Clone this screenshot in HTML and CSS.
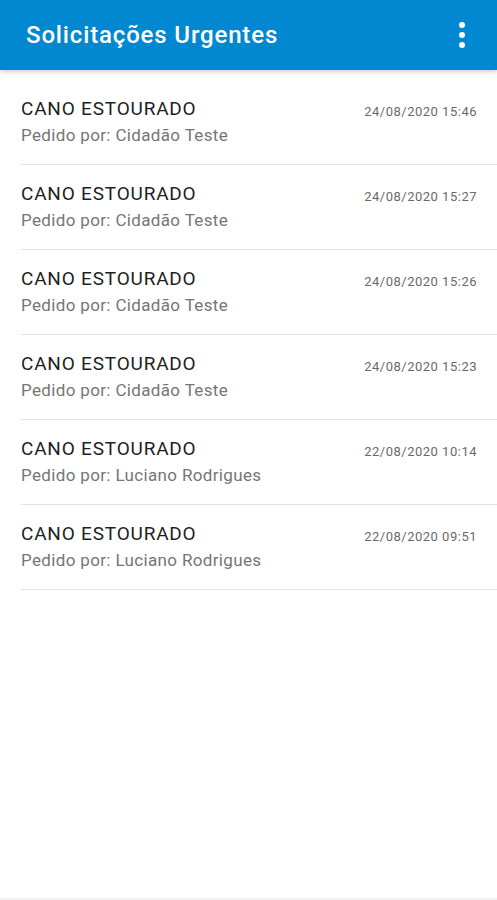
FILE: index.html
```html
<!DOCTYPE html>
<html lang="pt-BR">
<head>
  <meta charset="UTF-8">
  <meta name="viewport" content="width=device-width, initial-scale=1">
  <title>Solicitações Urgentes</title>
  <link rel="stylesheet" href="styles.css">
</head>
<body>
  <div class="app">
    <header class="toolbar">
      <h1 class="toolbar-title">Solicitações Urgentes</h1>
      <button class="menu-button" aria-label="Mais opções">
        <svg width="24" height="30" viewBox="0 0 24 30">
          <circle cx="12" cy="5" r="3" fill="#fff"/>
          <circle cx="12" cy="15" r="3" fill="#fff"/>
          <circle cx="12" cy="25" r="3" fill="#fff"/>
        </svg>
      </button>
    </header>

    <ul class="request-list">
      <li class="request">
        <div class="request-info">
          <div class="request-title">CANO ESTOURADO</div>
          <div class="request-author">Pedido por: Cidadão Teste</div>
        </div>
        <div class="request-date">24/08/2020 15:46</div>
      </li>
      <li class="request">
        <div class="request-info">
          <div class="request-title">CANO ESTOURADO</div>
          <div class="request-author">Pedido por: Cidadão Teste</div>
        </div>
        <div class="request-date">24/08/2020 15:27</div>
      </li>
      <li class="request">
        <div class="request-info">
          <div class="request-title">CANO ESTOURADO</div>
          <div class="request-author">Pedido por: Cidadão Teste</div>
        </div>
        <div class="request-date">24/08/2020 15:26</div>
      </li>
      <li class="request">
        <div class="request-info">
          <div class="request-title">CANO ESTOURADO</div>
          <div class="request-author">Pedido por: Cidadão Teste</div>
        </div>
        <div class="request-date">24/08/2020 15:23</div>
      </li>
      <li class="request">
        <div class="request-info">
          <div class="request-title">CANO ESTOURADO</div>
          <div class="request-author">Pedido por: Luciano Rodrigues</div>
        </div>
        <div class="request-date">22/08/2020 10:14</div>
      </li>
      <li class="request">
        <div class="request-info">
          <div class="request-title">CANO ESTOURADO</div>
          <div class="request-author">Pedido por: Luciano Rodrigues</div>
        </div>
        <div class="request-date">22/08/2020 09:51</div>
      </li>
    </ul>

    <div class="bottom-edge"></div>
  </div>
</body>
</html>
```

FILE: styles.css
```css
* {
  box-sizing: border-box;
  margin: 0;
  padding: 0;
}

body {
  font-family: Roboto, 'Noto Sans', sans-serif;
  background: #fff;
  color: #222;
}

.app {
  display: flex;
  flex-direction: column;
  min-height: 100vh;
}

.toolbar {
  display: flex;
  align-items: center;
  justify-content: space-between;
  height: 70px;
  padding: 0 23px 0 26px;
  background: #0288d1;
  box-shadow: 0 2px 4px rgba(0, 0, 0, 0.18);
  position: relative;
  z-index: 1;
}

.toolbar-title {
  color: #fff;
  font-size: 24px;
  font-weight: 500;
  letter-spacing: 0.85px;
}

.menu-button {
  display: flex;
  background: none;
  border: none;
  cursor: pointer;
}

.request-list {
  list-style: none;
  flex: 1;
  padding-top: 10px;
}

.request {
  display: flex;
  justify-content: space-between;
  align-items: flex-start;
  margin-left: 21px;
  padding: 16px 20px 16px 0;
  border-bottom: 1px solid #e4e4e4;
}

.request-title {
  font-size: 19px;
  line-height: 26px;
  letter-spacing: 0.8px;
  color: #1f1f1f;
}

.request-author {
  font-size: 17px;
  line-height: 26px;
  letter-spacing: 0.35px;
  color: #767676;
}

.request-date {
  font-size: 13px;
  line-height: 26px;
  letter-spacing: 0.5px;
  margin-top: 3px;
  color: #6a6a6a;
}

.bottom-edge {
  height: 2px;
  background: #f2f2f2;
}
```
